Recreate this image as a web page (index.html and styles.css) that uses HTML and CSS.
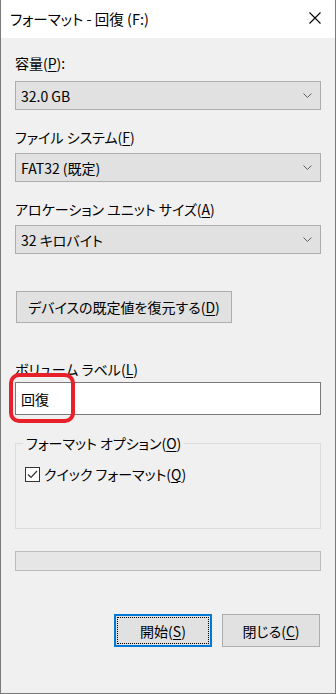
FILE: index.html
```html
<!DOCTYPE html>
<html lang="ja">
<head>
<meta charset="utf-8">
<link rel="stylesheet" href="styles.css">
</head>
<body>
<div class="window">
  <div class="titlebar">
    <span class="title">フォーマット - 回復 (F:)</span>
    <svg class="close" width="12" height="12" viewBox="0 0 12 12"><path d="M0.5 0.5L11.5 11.5M11.5 0.5L0.5 11.5" stroke="#000" stroke-width="1.1" fill="none"/></svg>
  </div>
  <div class="content">
    <div class="label l1">容量(<u>P</u>):</div>
    <div class="combo"><span>32.0 GB</span><svg class="chev" width="9" height="5" viewBox="0 0 9 5"><path d="M0.5 0.5L4.5 4.5L8.5 0.5" stroke="#606060" fill="none"/></svg></div>
    <div class="label l2">ファイル システム(<u>F</u>)</div>
    <div class="combo"><span>FAT32 (既定)</span><svg class="chev" width="9" height="5" viewBox="0 0 9 5"><path d="M0.5 0.5L4.5 4.5L8.5 0.5" stroke="#606060" fill="none"/></svg></div>
    <div class="label l2">アロケーション ユニット サイズ(<u>A</u>)</div>
    <div class="combo"><span>32 キロバイト</span><svg class="chev" width="9" height="5" viewBox="0 0 9 5"><path d="M0.5 0.5L4.5 4.5L8.5 0.5" stroke="#606060" fill="none"/></svg></div>
    <div class="btn restore">デバイスの既定値を復元する(<u>D</u>)</div>
    <div class="label l4">ボリューム ラベル(<u>L</u>)</div>
    <div class="field">
      <div class="input">回復</div>
      <div class="annot"></div>
    </div>
    <fieldset class="group">
      <legend>フォーマット オプション(<u>O</u>)</legend>
      <div class="check">
        <span class="box"><svg width="13" height="13" viewBox="0 0 13 13"><path d="M2 6.5L5 9.5L11 3" stroke="#333" stroke-width="1.2" fill="none"/></svg></span>
        <span>クイック フォーマット(<u>Q</u>)</span>
      </div>
    </fieldset>
    <div class="progress"></div>
    <div class="actions">
      <div class="btn act default"><span class="focus">開始(<u>S</u>)</span></div>
      <div class="btn act">閉じる(<u>C</u>)</div>
    </div>
  </div>
</div>
</body>
</html>
```
FILE: styles.css
```css
* { box-sizing: border-box; }
html, body { margin: 0; padding: 0; }
body {
  width: 336px;
  height: 694px;
  background: #f0f0f0;
  font-family: "Noto Sans CJK JP", "Noto Sans", sans-serif;
  font-size: 14px;
  font-feature-settings: "palt";
  color: #000;
  overflow: hidden;
}
u { text-decoration: underline; text-underline-offset: 2px; text-decoration-thickness: 1px; }
.window {
  width: 336px;
  height: 694px;
  border: 1px solid #7a7a7a;
  border-top: none;
  background: #f0f0f0;
  display: flex;
  flex-direction: column;
}
.titlebar {
  height: 38px;
  background: #fff;
  display: flex;
  align-items: center;
  justify-content: space-between;
  padding: 0 14px 2px 9px;
  flex: none;
}
.title { font-size: 14.5px; line-height: 20px; padding-top: 2px; }
.close { display: block; }
.content {
  padding: 16px 14px 0 14px;
  display: flex;
  flex-direction: column;
}
.label { line-height: 18px; height: 18px; }
.l1 { margin-bottom: 9px; }
.l2 { margin-top: 18px; margin-bottom: 7px; }
.l4 { margin-top: 37px; margin-bottom: 4px; }
.combo {
  height: 29px;
  background: #e1e1e1;
  border: 1px solid #adadad;
  display: flex;
  align-items: center;
  justify-content: space-between;
  padding: 0 8px 0 5px;
  line-height: 18px;
}
.chev { display: block; }
.btn {
  background: #e1e1e1;
  border: 1px solid #adadad;
  display: flex;
  align-items: center;
  justify-content: center;
  line-height: 18px;
}
.restore {
  margin-top: 37px;
  width: 216px;
  height: 32px;
  margin-left: 1px;
}
.field { position: relative; }
.input {
  height: 33px;
  background: #fff;
  border: 1px solid #7a7a7a;
  padding: 0 5px;
  display: flex;
  align-items: center;
  line-height: 18px;
}
.annot {
  position: absolute;
  left: -6px;
  top: -9px;
  width: 66px;
  height: 50px;
  border: 4px solid #e8202a;
  border-radius: 10px;
}
.group {
  margin: 19px 0 0 0;
  padding: 0 9px;
  border: 1px solid #dcdcdc;
  height: 95px;
  min-width: 0;
}
.group legend {
  padding: 0 3px;
  margin-left: -2px;
  line-height: 18px;
}
.check {
  display: flex;
  align-items: center;
  gap: 4px;
  margin-top: 13px;
  line-height: 18px;
}
.box {
  width: 15px;
  height: 15px;
  border: 1px solid #333;
  background: #fff;
  display: flex;
  align-items: center;
  justify-content: center;
  flex: none;
}
.box svg { display: block; }
.progress {
  margin-top: 22px;
  height: 20px;
  background: #e6e6e6;
  border: 1px solid #bcbcbc;
}
.actions {
  margin-top: 43px;
  display: flex;
  justify-content: flex-end;
  gap: 10px;
  padding-right: 1px;
}
.act { width: 98px; height: 33px; }
.default {
  border: 2px solid #0078d7;
  padding: 1px;
}
.focus {
  flex: 1;
  align-self: stretch;
  border: 1px dotted #000;
  display: flex;
  align-items: center;
  justify-content: center;
}
```
